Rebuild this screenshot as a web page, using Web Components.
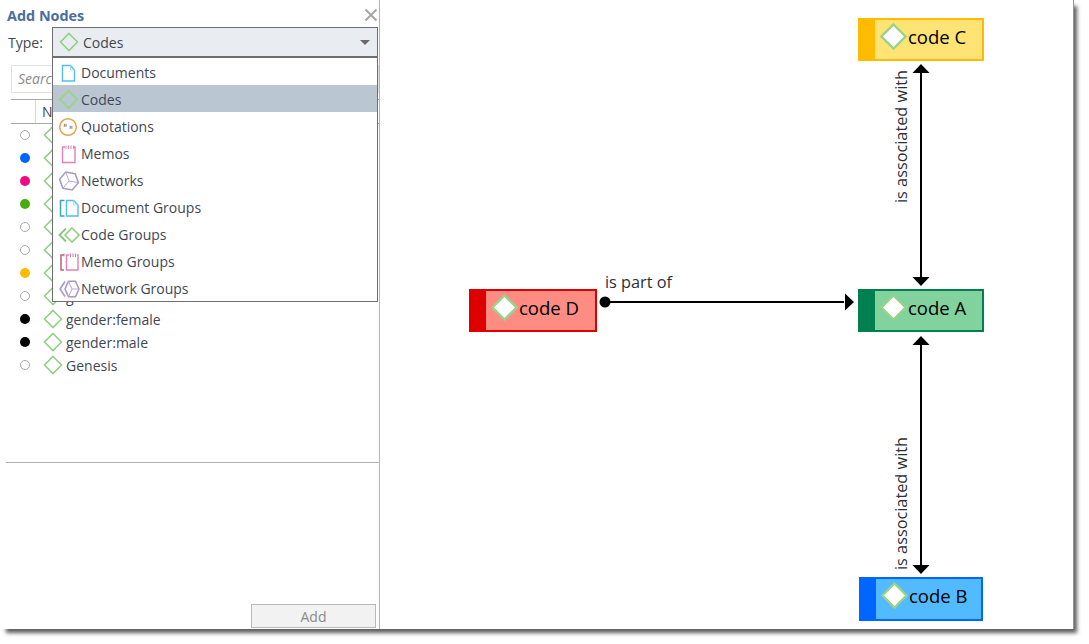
<!DOCTYPE html>
<html lang="en">
<head>
<meta charset="utf-8">
<title>Add Nodes</title>
<style>
  html, body { margin: 0; padding: 0; background: #fff; }
  body { width: 1089px; height: 644px; overflow: hidden; font-family: "Open Sans", "Liberation Sans", sans-serif; }
</style>
</head>
<body>
<app-window>
  <add-nodes-panel slot="left"></add-nodes-panel>
  <graph-canvas slot="right">
    <graph-node style="left:478px;top:18px;width:126px;height:43px" band="#ffbb00" fill="#ffe375">code C</graph-node>
    <graph-node style="left:478px;top:289px;width:126px;height:43px" band="#008050" fill="#82d29e">code A</graph-node>
    <graph-node style="left:89px;top:289px;width:128px;height:43px" band="#de0000" fill="#ff8c82">code D</graph-node>
    <graph-node style="left:479px;top:577px;width:124px;height:44px" band="#0066ff" fill="#52baff">code B</graph-node>
  </graph-canvas>
</app-window>

<script>
const DIAMOND = (c, h, fill = 'none', sw = 1.6, stroke = '#93cf86') =>
  `<polygon points="${c},${c - h} ${c + h},${c} ${c},${c + h} ${c - h},${c}" fill="${fill}" stroke="${stroke}" stroke-width="${sw}"/>`;

const HEX = 'M7.75 2.07L17.1 3.72 20.36 12.65 14.25 19.93 4.9 18.28 1.64 9.35z';

const ICONS = {
  code: DIAMOND(11, 8.5),
  codeSelected: DIAMOND(10.5, 8.8, 'none', 2.1, '#9ad38c'),
  document: `<path d="M4.5 3.5h8l4 4.5v11h-12z" fill="none" stroke="#4fbdf0" stroke-width="1.4"/><path d="M12.5 3.5v4.5h4" fill="none" stroke="#a8dff7" stroke-width="1"/>`,
  quotation: `<circle cx="10" cy="11" r="8.3" fill="none" stroke="#e8a352" stroke-width="1.6"/><path d="M6.3 7.8v3M8 7.8v3M12.2 9.8v3M13.9 9.8v3" stroke="#7d7468" stroke-width="1"/>`,
  memo: `<path d="M7 4H4.5v15.5H17V4h-1.5" fill="none" stroke="#e77fb4" stroke-width="1.4"/><path d="M8 2.5V6M10.5 2.5V6M13 2.5V6M15.5 2.5V6" stroke="#e77fb4" stroke-width="1"/>`,
  network: `<path d="${HEX}" fill="none" stroke="#a79bc9" stroke-width="1.6"/><path d="M7.75 2.07L11 11l9.36 1.65M11 11l-6.1 7.28" fill="none" stroke="#b5abd3" stroke-width="1"/>`,
  documentGroup: `<path d="M6.5 3.5H2.5V19h4" fill="none" stroke="#3aa6b0" stroke-width="1.5"/><path d="M8.5 3.5h7l4.5 4.5v11H8.5z" fill="none" stroke="#4fbdf0" stroke-width="1.4"/><path d="M15.5 3.5V8H20" fill="none" stroke="#a8dff7" stroke-width="1"/>`,
  codeGroup: `<path d="M8 4.500L1.500 11 8 17.500" fill="none" stroke="#86c777" stroke-width="1.800"/><polygon points="14,4 21,11 14,18 7,11" fill="none" stroke="#93cf86" stroke-width="1.600"/>`,
  memoGroup: `<path d="M6 4H3v15h3" fill="none" stroke="#b2677f" stroke-width="1.5"/><path d="M11 4H8.5v15H20V4h-1" fill="none" stroke="#e77fb4" stroke-width="1.4"/><path d="M12.5 2.5V6M15 2.5V6M17.5 2.5V6M6 2.5v3" stroke="#d177a3" stroke-width="1"/>`,
  networkGroup: `<path d="M7 3.5L2 11l5 7.5" fill="none" stroke="#a79bc9" stroke-width="1.6"/><path d="M10.5 3.2L17.5 3.2 21 11 17.5 18.8 10.5 18.8 7 11z" fill="none" stroke="#a79bc9" stroke-width="1.6"/><path d="M10.5 3.2L14 11l7 0M14 11l-3.5 7.8" fill="none" stroke="#b5abd3" stroke-width="1"/>`
};

class NodeIcon extends HTMLElement {
  constructor() {
    super();
    this.attachShadow({ mode: 'open' });
  }

  connectedCallback() {
    const kind = this.getAttribute('kind') || 'code';
    this.shadowRoot.innerHTML = `
      <style>
        :host { display: block; width: 22px; height: 22px; flex: none; }
        svg { display: block; }
      </style>
      <svg width="22" height="22" viewBox="0 0 22 22">${ICONS[kind]}</svg>
    `;
  }
}

class MenuItem extends HTMLElement {
  constructor() {
    super();
    this.attachShadow({ mode: 'open' });
  }

  connectedCallback() {
    const kind = this.getAttribute('kind');
    this.shadowRoot.innerHTML = `
      <style>
        :host {
          box-sizing: border-box;
          display: flex;
          align-items: center;
          gap: 1px;
          height: 27px;
          padding: 2px 0 0 5px;
          color: #3f4753;
        }
        :host([selected]) { background: #bac7d3; }
      </style>
      <node-icon kind="${kind}"></node-icon>
      <slot></slot>
    `;
  }
}

class TypeSelect extends HTMLElement {
  constructor() {
    super();
    this.attachShadow({ mode: 'open' });
    this.shadowRoot.innerHTML = `
      <style>
        :host { display: block; position: relative; width: 326px; height: 30px; }
        .box {
          box-sizing: border-box;
          display: flex;
          align-items: center;
          gap: 3px;
          height: 30px;
          padding-left: 5px;
          background: #e9edf2;
          border: 1px solid #6f6f6f;
          color: #3f4753;
        }
        .box span { flex: 1; }
        .caret {
          width: 0;
          height: 0;
          margin-right: 7px;
          border: 5px solid transparent;
          border-top: 5px solid #6a6a6a;
          border-bottom: 0;
        }
        .menu {
          position: absolute;
          z-index: 5;
          left: 0;
          top: 30px;
          box-sizing: border-box;
          width: 326px;
          height: 245px;
          background: #fff;
          border: 1px solid #6f6f6f;
        }
      </style>
      <div class="box">
        <node-icon kind="code"></node-icon>
        <span>Codes</span>
        <div class="caret"></div>
      </div>
      <div class="menu"><slot></slot></div>
    `;
  }
}

class CodeRow extends HTMLElement {
  constructor() {
    super();
    this.attachShadow({ mode: 'open' });
  }

  connectedCallback() {
    const color = this.getAttribute('color');
    const dot = color ? `background:${color}` : 'border:1.5px solid #ababab';
    this.shadowRoot.innerHTML = `
      <style>
        :host {
          box-sizing: border-box;
          display: flex;
          align-items: center;
          height: 23px;
          padding: 0 0 1px 20px;
          color: #3f4753;
        }
        .dot { box-sizing: border-box; flex: none; width: 10px; height: 10px; border-radius: 50%; margin-right: 12px; }
        node-icon { margin-right: 2px; }
      </style>
      <div class="dot" style="${dot}"></div>
      <node-icon kind="code"></node-icon>
      <slot></slot>
    `;
  }
}

class AddNodesPanel extends HTMLElement {
  constructor() {
    super();
    this.attachShadow({ mode: 'open' });
    this.shadowRoot.innerHTML = `
      <style>
        :host {
          box-sizing: border-box;
          display: flex;
          flex-direction: column;
          width: 380px;
          height: 629px;
          border-right: 1px solid #b4b4b4;
          font-size: 14px;
        }
        .title {
          display: flex;
          align-items: center;
          justify-content: space-between;
          height: 22px;
          margin-top: 5px;
          padding: 0 1px 0 7px;
          color: #4a6d9f;
          font-weight: 700;
          font-size: 14.4px;
        }
        .title span { padding-bottom: 2px; }
        .close { display: block; margin-bottom: 3px; }
        .type { display: flex; align-items: center; height: 30px; padding-left: 8px; color: #3f4753; }
        .type label { width: 44px; }
        .search {
          box-sizing: border-box;
          height: 28px;
          margin: 8px 0 0 11px;
          padding: 3px 6px;
          border: 1px solid #e2e2e2;
          color: #8a8a8a;
          font-style: italic;
        }
        .head {
          box-sizing: border-box;
          display: flex;
          height: 25px;
          margin: 6px 0 0 11px;
          border-top: 1px solid #a8a8a8;
          border-bottom: 1px solid #a8a8a8;
          color: #3f4753;
        }
        .head div:first-child { width: 24px; border-right: 1px solid #d8d8d8; }
        .head div:last-child { padding-left: 6px; line-height: 23px; }
        .rows { flex: 1; }
        .lower {
          box-sizing: border-box;
          display: flex;
          justify-content: flex-end;
          align-items: flex-end;
          height: 167px;
          margin-left: 6px;
          padding: 0 3px 1px 0;
          border-top: 1px solid #b4b4b4;
        }
        .add {
          box-sizing: border-box;
          width: 125px;
          height: 24px;
          background: #f2f2f2;
          border: 1px solid #b2baba;
          color: #8a8a8a;
          text-align: center;
          line-height: 23px;
        }
      </style>
      <div class="title">
        <span>Add Nodes</span>
        <svg class="close" width="14" height="14" viewBox="0 0 14 14"><path d="M1.5 1.5l11 11M12.5 1.5l-11 11" stroke="#a5a5a5" stroke-width="1.9"/></svg>
      </div>
      <div class="type">
        <label>Type:</label>
        <type-select>
          <menu-item kind="document">Documents</menu-item>
          <menu-item kind="codeSelected" selected>Codes</menu-item>
          <menu-item kind="quotation">Quotations</menu-item>
          <menu-item kind="memo">Memos</menu-item>
          <menu-item kind="network">Networks</menu-item>
          <menu-item kind="documentGroup">Document Groups</menu-item>
          <menu-item kind="codeGroup">Code Groups</menu-item>
          <menu-item kind="memoGroup">Memo Groups</menu-item>
          <menu-item kind="networkGroup">Network Groups</menu-item>
        </type-select>
      </div>
      <div class="search">Search</div>
      <div class="head"><div></div><div>Name</div></div>
      <div class="rows">
        <code-row></code-row>
        <code-row color="#0066ff"></code-row>
        <code-row color="#ef0a85"></code-row>
        <code-row color="#46ad0e"></code-row>
        <code-row></code-row>
        <code-row></code-row>
        <code-row color="#ffbb00"></code-row>
        <code-row>g</code-row>
        <code-row color="#000">gender:female</code-row>
        <code-row color="#000">gender:male</code-row>
        <code-row>Genesis</code-row>
      </div>
      <div class="lower"><div class="add">Add</div></div>
    `;
  }
}

class GraphNode extends HTMLElement {
  constructor() {
    super();
    this.attachShadow({ mode: 'open' });
  }

  connectedCallback() {
    const band = this.getAttribute('band');
    const fill = this.getAttribute('fill');
    this.shadowRoot.innerHTML = `
      <style>
        :host {
          position: absolute;
          box-sizing: border-box;
          display: flex;
          align-items: center;
          padding-bottom: 7px;
          border: 2px solid ${band};
          border-left-width: 17px;
          background: ${fill};
          color: #000;
          font-size: 18.5px;
          white-space: nowrap;
        }
        svg { display: block; flex: none; margin-left: 4px; }
      </style>
      <svg width="29" height="29" viewBox="0 0 29 29">${DIAMOND(14.5, 12, '#fff', 2.4, '#98d28b')}</svg>
      <slot></slot>
    `;
  }
}

class GraphCanvas extends HTMLElement {
  constructor() {
    super();
    this.attachShadow({ mode: 'open' });
    this.shadowRoot.innerHTML = `
      <style>
        :host { display: block; position: relative; width: 693px; height: 629px; }
        svg { position: absolute; left: 0; top: 0; }
        text { font-size: 16.3px; fill: #2b2f36; }
      </style>
      <svg width="693" height="629" viewBox="0 0 693 629">
        <g stroke="#000" stroke-width="2" fill="none">
          <path d="M541 72V278"/>
          <path d="M541 344V566"/>
          <path d="M225 302H464"/>
        </g>
        <g fill="#000">
          <path d="M541 64l-8.500 9h17z"/>
          <path d="M541 286l-8.500-9h17z"/>
          <path d="M541 336l-8.500 9h17z"/>
          <path d="M541 574l-8.500-9h17z"/>
          <path d="M474 302l-9-8.500v17z"/>
          <circle cx="225" cy="302" r="5.500"/>
        </g>
        <text x="225" y="288">is part of</text>
        <text transform="translate(527 203) rotate(-90)">is associated with</text>
        <text transform="translate(527 570) rotate(-90)">is associated with</text>
      </svg>
      <slot></slot>
    `;
  }
}

class AppWindow extends HTMLElement {
  constructor() {
    super();
    this.attachShadow({ mode: 'open' });
    this.shadowRoot.innerHTML = `
      <style>
        :host {
          display: flex;
          width: 1073px;
          height: 629px;
          background: #fff;
          box-shadow: 1px 0 0 #8a97a8, 5px 5px 4px -1px #5e5e5e;
        }
      </style>
      <slot name="left"></slot>
      <slot name="right"></slot>
    `;
  }
}

customElements.define('node-icon', NodeIcon);
customElements.define('menu-item', MenuItem);
customElements.define('type-select', TypeSelect);
customElements.define('code-row', CodeRow);
customElements.define('add-nodes-panel', AddNodesPanel);
customElements.define('graph-node', GraphNode);
customElements.define('graph-canvas', GraphCanvas);
customElements.define('app-window', AppWindow);
</script>
</body>
</html>
